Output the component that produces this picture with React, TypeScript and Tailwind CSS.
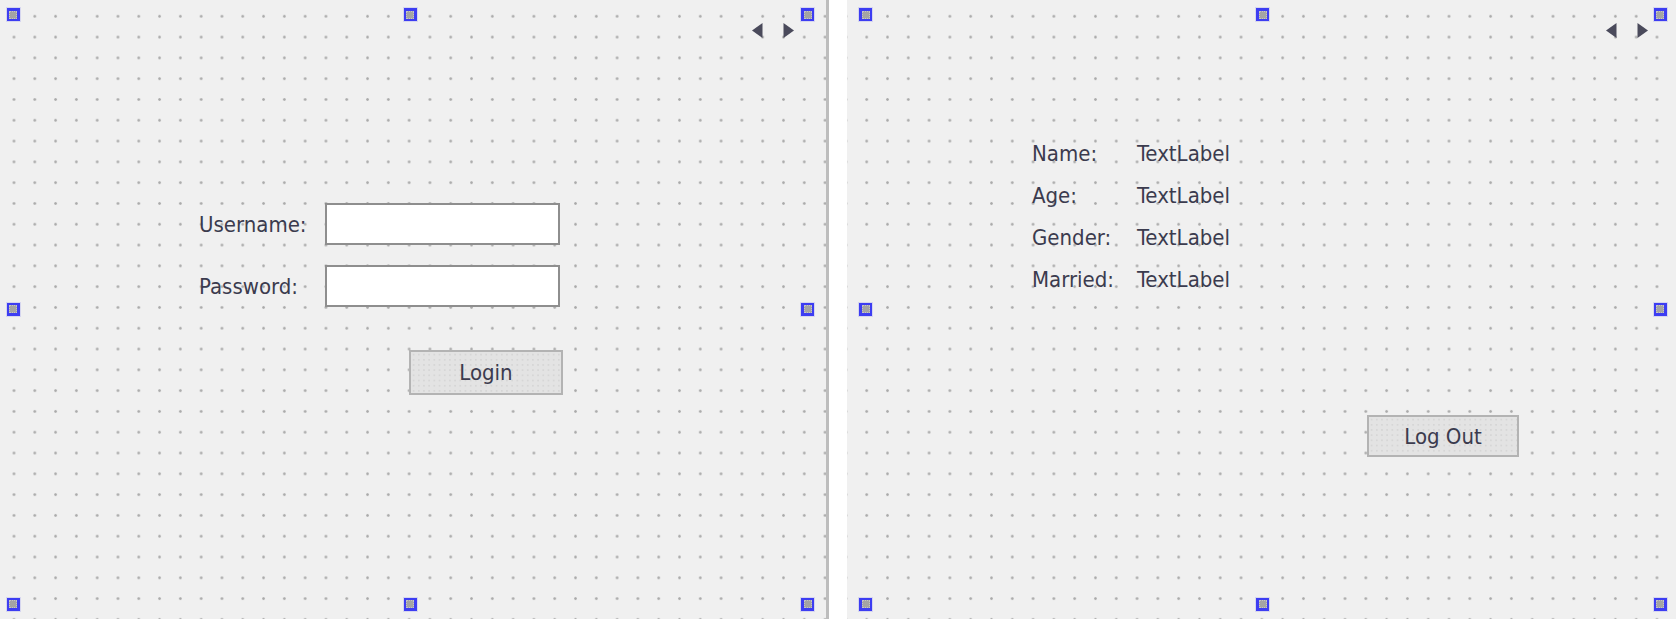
import React from "react";

const font = "font-['DejaVu_Sans',sans-serif] font-stretch-condensed text-[22px] text-[#3b3b4e]";

function Handle() {
  return (
    <div className="w-[13px] h-[13px] bg-[#3d3df2] flex items-center justify-center shadow-[0_0_0_1px_#d6d6ef]">
      <div className="w-[8px] h-[8px] bg-[#a4a4a4] border border-dotted border-[#c4c4c4]" />
    </div>
  );
}

function HandleRow({ middle = true }: { middle?: boolean }) {
  return (
    <div className="flex justify-between items-center">
      <Handle />
      {middle ? <Handle /> : null}
      <Handle />
    </div>
  );
}

function SelectionHandles({ className }: { className: string }) {
  return (
    <div className={`absolute inset-0 flex flex-col justify-between pointer-events-none ${className}`}>
      <HandleRow />
      <HandleRow middle={false} />
      <HandleRow />
    </div>
  );
}

function Arrows({ className }: { className: string }) {
  return (
    <div className={`absolute flex gap-[20px] ${className}`}>
      <svg width="11" height="15" viewBox="0 0 11 15">
        <polygon points="10.5,0 0,7.5 10.5,15" fill="#4a4a5b" />
      </svg>
      <svg width="11" height="15" viewBox="0 0 11 15">
        <polygon points="0.5,0 11,7.5 0.5,15" fill="#4a4a5b" />
      </svg>
    </div>
  );
}

function Button({ label, className }: { label: string; className: string }) {
  return (
    <div
      className={`border-2 border-[#b3b3b3] bg-[#e3e3e3] bg-[radial-gradient(circle,#d6d6d6_0.6px,transparent_1px)] bg-[length:5.2px_5.2px] flex items-center justify-center ${font} ${className}`}
    >
      {label}
    </div>
  );
}

function Input() {
  return <div className="w-[235px] h-[42px] bg-white border-2 border-[#8e8e8e]" />;
}

export default function App() {
  const gridBg =
    "bg-[#f0f0f0] bg-[radial-gradient(circle,#a9a9a9_0.9px,transparent_1.7px)] bg-[length:20.8px_20.8px]";
  return (
    <div className="w-[1676px] h-[619px] flex overflow-hidden bg-[#f0f0f0]">
      {/* Left: login form */}
      <div className={`relative w-[826px] h-full shrink-0 ${gridBg} bg-[position:3.6px_5.9px]`}>
        <div className="flex flex-col pt-[203px] pl-[199px]">
          <div className="flex items-center">
            <span className={`w-[126px] ${font}`}>Username:</span>
            <Input />
          </div>
          <div className="flex items-center mt-[20px]">
            <span className={`w-[126px] ${font}`}>Password:</span>
            <Input />
          </div>
          <Button label="Login" className="mt-[43px] ml-[210px] w-[154px] h-[45px]" />
        </div>

        <SelectionHandles className="pl-[6.5px] pr-[12px] pt-[8px] pb-[8.5px]" />
        <Arrows className="left-[752px] top-[23px]" />
      </div>

      {/* Separator */}
      <div className="w-[3px] h-full shrink-0 bg-[#bdbdbd]" />
      <div className="w-[18px] h-full shrink-0 bg-white" />

      {/* Right: profile */}
      <div className={`relative flex-1 h-full ${gridBg} bg-[position:9.3px_5.9px]`}>
        <div className="flex flex-col items-start pt-[133px] pl-[185px]">
          {[
            ["Name:", "TextLabel"],
            ["Age:", "TextLabel"],
            ["Gender:", "TextLabel"],
            ["Married:", "TextLabel"],
          ].map(([k, v]) => (
            <div key={k} className={`flex h-[42px] leading-[42px] ${font}`}>
              <span className="w-[105px]">{k}</span>
              <span>{v}</span>
            </div>
          ))}
          <Button label="Log Out" className="mt-[114px] ml-[335px] w-[152px] h-[42px]" />
        </div>

        <SelectionHandles className="pl-[12px] pr-[9.5px] pt-[8px] pb-[8.5px]" />
        <Arrows className="left-[759px] top-[23px]" />
      </div>
    </div>
  );
}
